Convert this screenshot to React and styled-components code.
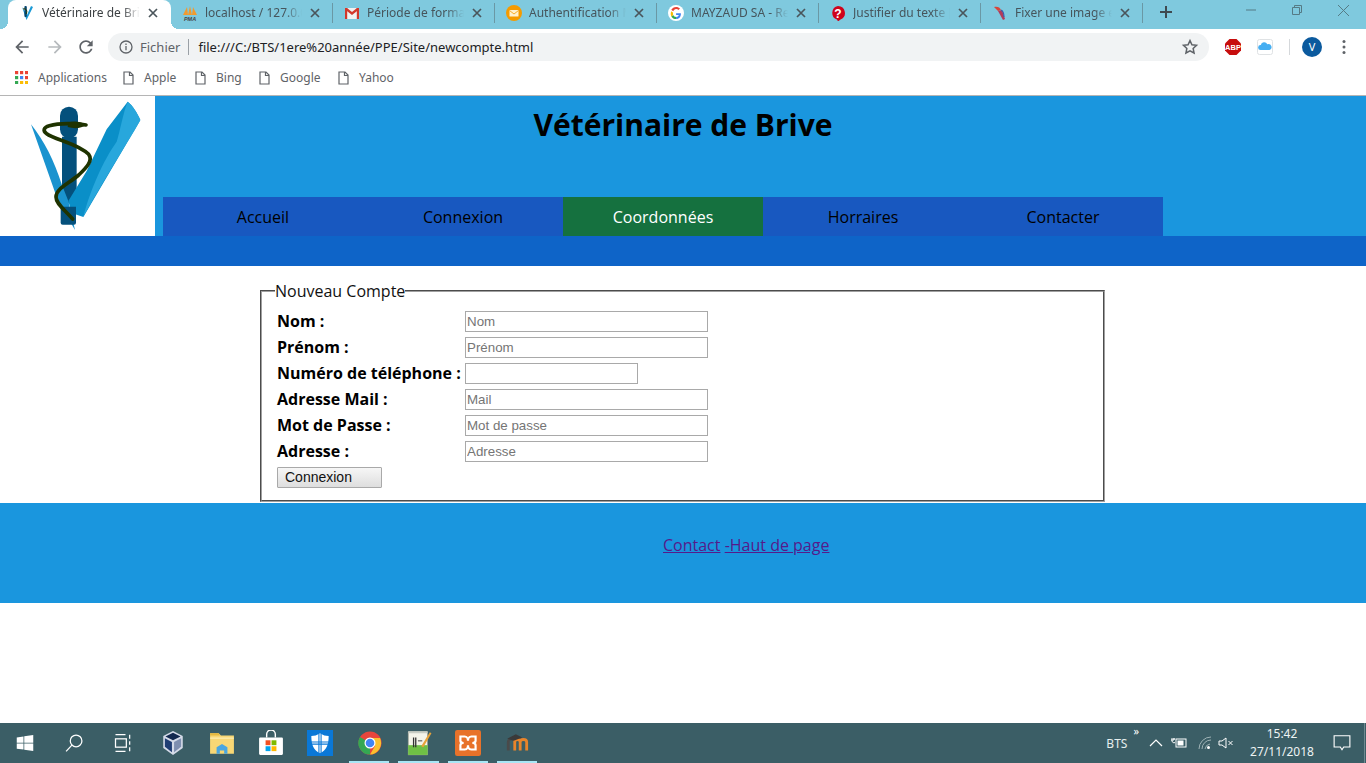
import React from 'react';
import styled, { createGlobalStyle } from 'styled-components';

const UI_FONT = '"Noto Sans", "Open Sans", sans-serif';
const PAGE_FONT = '"Open Sans", "Noto Sans", sans-serif';
const FORM_FONT = '"Liberation Sans", Arial, sans-serif';

const colors = {
  strip: '#7fc9de',
  pill: '#f1f3f4',
  icon: '#5f6368',
  blue: '#1a96de',
  nav: '#1858c0',
  navActive: '#15713f',
  subBar: '#0e64c8',
  taskbar: '#3b5e66',
};

const GlobalStyle = createGlobalStyle`
  html, body {
    margin: 0;
    padding: 0;
    height: 100%;
    background: #fff;
    overflow: hidden;
  }
  #root {
    height: 100%;
  }
`;

const Screen = styled.div`
  height: 763px;
  display: flex;
  flex-direction: column;
`;

/* browser chrome */
const TabStrip = styled.div`
  height: 29px;
  flex: none;
  background: ${colors.strip};
  display: flex;
  padding-left: 8px;
  font-family: ${UI_FONT};
  font-size: 12px;
`;

const TabItem = styled.div`
  position: relative;
  width: ${(p) => (p.$active ? 163 : 162)}px;
  box-sizing: border-box;
  display: flex;
  align-items: center;
  padding: 0 12px 4px 11px;
  gap: 7px;
  background: ${(p) => (p.$active ? '#fff' : 'transparent')};
  color: ${(p) => (p.$active ? '#3c4043' : '#46555c')};
  border-radius: ${(p) => (p.$active ? '8px 8px 0 0' : '0')};

  ${(p) =>
    p.$active &&
    `
    &::before, &::after {
      content: '';
      position: absolute;
      bottom: 0;
      width: 8px;
      height: 8px;
    }
    &::before {
      left: -8px;
      background: radial-gradient(circle at 0 0, transparent 8px, #fff 8px);
    }
    &::after {
      right: -8px;
      background: radial-gradient(circle at 100% 0, transparent 8px, #fff 8px);
    }
  `}

  ${(p) =>
    !p.$active &&
    `
    &::after {
      content: '';
      position: absolute;
      right: 0;
      top: 3px;
      height: 20px;
      width: 1px;
      background: #6a98a5;
    }
  `}
`;

const TabTitle = styled.span`
  flex: 1;
  min-width: 0;
  white-space: nowrap;
  overflow: hidden;
  mask-image: linear-gradient(to right, #000 82%, transparent 100%);
`;

const TabIcon = styled.svg`
  width: 16px;
  height: 16px;
  flex: none;
`;

const TabClose = styled.svg`
  width: 12px;
  height: 12px;
  flex: none;
`;

const NewTab = styled.svg`
  width: 14px;
  height: 14px;
  margin: 5px 0 0 16px;
  flex: none;
`;

const WindowButtons = styled.div`
  margin-left: auto;
  display: flex;
`;

const WindowButton = styled.div`
  width: 46px;
  height: 20px;
  display: flex;
  align-items: center;
  justify-content: center;
  color: #557a85;
`;

const Toolbar = styled.div`
  height: 32px;
  flex: none;
  display: flex;
  align-items: flex-end;
  background: #fff;
`;

const NavButton = styled.svg`
  width: 20px;
  height: 20px;
  flex: none;
  margin: 0 0 4px ${(p) => p.$gap}px;
`;

const AddressPill = styled.div`
  width: 1101px;
  height: 28px;
  margin-left: 12px;
  flex: none;
  box-sizing: border-box;
  background: ${colors.pill};
  border-radius: 14px;
  display: flex;
  align-items: center;
  padding: 0 10px 0 11px;
  font-family: ${UI_FONT};
  font-size: 13px;
  color: #202124;
`;

const SecureLabel = styled.span`
  margin-left: 7px;
  padding-right: 8px;
  color: #5f6368;
  border-right: 1px solid #9aa0a6;
  line-height: 16px;
`;

const UrlText = styled.span`
  margin-left: 9px;
  flex: 1;
`;

const ExtensionIcon = styled.svg`
  width: ${(p) => p.$size || 18}px;
  height: ${(p) => p.$size || 18}px;
  flex: none;
  margin: 0 0 ${(p) => p.$bottom ?? 5}px ${(p) => p.$gap}px;
`;

const ToolbarDivider = styled.div`
  width: 1px;
  height: 16px;
  background: #d5d8db;
  margin: 0 0 6px 15px;
  flex: none;
`;

const BookmarkBar = styled.div`
  height: 35px;
  flex: none;
  box-sizing: border-box;
  border-bottom: 1px solid #b5b5b5;
  display: flex;
  align-items: center;
  padding: 0 0 1px 15px;
  background: #fff;
  font-family: ${UI_FONT};
  font-size: 12px;
  color: #5f6368;
`;

const Bookmark = styled.div`
  display: flex;
  align-items: center;
  width: ${(p) => p.$width}px;
  flex: none;
  gap: ${(p) => p.$gap}px;
`;

/* site */
const SiteHeader = styled.header`
  height: 140px;
  flex: none;
  background: ${colors.blue};
  display: grid;
  grid-template-columns: 155px 1fr 155px;
  grid-template-rows: 101px 39px;
`;

const LogoBox = styled.div`
  grid-row: 1 / 3;
  background: #fff;
`;

const SiteTitle = styled.h1`
  margin: 0;
  padding-top: 8px;
  text-align: center;
  font-family: ${PAGE_FONT};
  font-size: 30px;
  font-weight: 700;
  line-height: 41px;
  color: #000;
`;

const Nav = styled.nav`
  grid-column: 2 / 4;
  margin-left: 8px;
  display: flex;
`;

const NavItem = styled.a`
  width: 200px;
  display: flex;
  align-items: center;
  justify-content: center;
  background: ${(p) => (p.$active ? colors.navActive : colors.nav)};
  color: ${(p) => (p.$active ? '#fff' : '#000')};
  font-family: ${PAGE_FONT};
  font-size: 16px;
`;

const SubBar = styled.div`
  height: 30px;
  flex: none;
  background: ${colors.subBar};
`;

const Main = styled.main`
  flex: none;
  height: 237px;
  box-sizing: border-box;
  padding: 14px 0 0 260px;
  font-family: ${PAGE_FONT};
`;

const FormBox = styled.fieldset`
  width: 845px;
  height: 222px;
  box-sizing: border-box;
  margin: 0;
  padding: 0 15px;
  border: 2px groove #a0a0a0;
  min-inline-size: 0;
`;

const FormLegend = styled.legend`
  padding: 0;
  margin-left: -2px;
  font-size: 16px;
  line-height: 22px;
  color: #111;
`;

const FieldList = styled.div`
  display: flex;
  flex-direction: column;
  gap: 5px;
  padding-top: 9px;
`;

const FieldRow = styled.label`
  display: grid;
  grid-template-columns: 188px auto;
  justify-content: start;
  align-items: center;
  height: 21px;
`;

const FieldLabel = styled.strong`
  font-size: 16px;
  font-weight: 700;
  line-height: 21px;
  color: #000;
`;

const TextField = styled.input`
  width: ${(p) => p.$width || 243}px;
  height: 21px;
  box-sizing: border-box;
  margin: 0;
  padding: 1px;
  border: 1px solid #a9a9a9;
  border-radius: 0;
  outline: none;
  background: #fff;
  font-family: ${FORM_FONT};
  font-size: 13.33px;

  &::placeholder {
    color: #757575;
    opacity: 1;
  }
`;

const SubmitButton = styled.button`
  display: block;
  width: 105px;
  height: 21px;
  margin-top: 5px;
  box-sizing: border-box;
  padding: 0 0 0 7px;
  text-align: left;
  border: 1px solid #a9a9a9;
  border-radius: 1px;
  background: linear-gradient(#f6f6f6, #dedede);
  color: #111;
  font-family: ${FORM_FONT};
  font-size: 14px;
  line-height: 19px;
`;

const SiteFooter = styled.footer`
  height: 100px;
  flex: none;
  box-sizing: border-box;
  background: ${colors.blue};
  padding: 31px 0 0 663px;
  font-family: ${PAGE_FONT};
  font-size: 16px;
  line-height: 22px;
  color: #551a8b;
`;

const FooterLink = styled.a`
  color: #551a8b;
  text-decoration: underline;
`;

const Filler = styled.div`
  flex: 1;
  background: #fff;
`;

/* windows taskbar */
const Taskbar = styled.div`
  height: 40px;
  flex: none;
  background: ${colors.taskbar};
  display: flex;
  align-items: stretch;
`;

const TaskSlot = styled.div`
  position: relative;
  width: 49.3px;
  flex: none;
  display: flex;
  align-items: center;
  justify-content: center;

  ${(p) =>
    p.$running &&
    `
    &::after {
      content: '';
      position: absolute;
      left: 4px;
      right: 5px;
      bottom: 0;
      height: 2px;
      background: #a8e6f5;
    }
  `}
`;

const TaskIcon = styled.svg`
  width: ${(p) => p.$size || 24}px;
  height: ${(p) => p.$size || 24}px;
`;

const Tray = styled.div`
  margin-left: auto;
  display: flex;
  align-items: center;
  color: #fff;
  font-family: ${UI_FONT};
  font-size: 12px;
`;

const TrayLabel = styled.span`
  margin-right: 3px;
  color: #e6eeee;
`;

const TrayChevrons = styled.span`
  font-size: 11px;
  line-height: 11px;
  align-self: flex-start;
  margin: 2px 0 0 3px;
`;

const TrayIcon = styled.svg`
  width: ${(p) => p.$size || 16}px;
  height: ${(p) => p.$size || 16}px;
  margin-left: ${(p) => p.$gap}px;
  flex: none;
`;

const Clock = styled.div`
  width: 76px;
  margin-left: 10px;
  text-align: center;
  line-height: 18px;
  color: #eef4f4;
`;

const NotifySlot = styled.div`
  width: 45px;
  margin-left: 0;
  display: flex;
  justify-content: center;
  align-self: stretch;
  align-items: center;
  box-sizing: border-box;
  border-right: 1px solid #6f8b91;
  margin-right: 1px;
`;

/* drawings */
const CloseGlyph = () => (
  <TabClose viewBox="0 0 12 12">
    <path d="M2 2l8 8M10 2l-8 8" stroke="#4a555b" strokeWidth="1.7" />
  </TabClose>
);

const VetFavicon = () => (
  <TabIcon viewBox="0 0 16 16">
    <path d="M3 2l4.5 13L14 2l-2-1-4 9z" fill="#1a9ad6" />
    <rect x="5.4" y="1" width="2.4" height="11" rx="1" fill="#06466f" />
    <path d="M4 4c3-1 5 2 3 5" stroke="#1f3300" strokeWidth="1" fill="none" />
  </TabIcon>
);

const PmaFavicon = () => (
  <TabIcon viewBox="0 0 16 16">
    <path d="M1 10L5 2l1 8zM6 10l2-9 2 9zM10 10l1-8 4 8z" fill="#f29a2e" />
    <text x="8" y="15.5" textAnchor="middle" fontFamily="Liberation Sans" fontSize="5.5" fontWeight="700" fontStyle="italic" fill="#444">PMA</text>
  </TabIcon>
);

const GmailFavicon = () => (
  <TabIcon viewBox="0 0 16 16">
    <path d="M1 3h14v11h-14z" fill="#f1f1f1" />
    <path d="M1 3h2.2v11H1zM12.8 3H15v11h-2.2z" fill="#d2382c" />
    <path d="M1 3h2l5 4 5-4h2v1.5L8 10 1 4.5z" fill="#d2382c" />
  </TabIcon>
);

const MailFavicon = () => (
  <TabIcon viewBox="0 0 16 16">
    <circle cx="8" cy="8" r="8" fill="#f59b00" />
    <rect x="3.5" y="5" width="9" height="6.5" rx=".6" fill="#fff1d0" />
    <path d="M3.5 5.5L8 9l4.5-3.5" stroke="#f59b00" strokeWidth=".8" fill="none" />
  </TabIcon>
);

const GoogleFavicon = () => (
  <TabIcon viewBox="0 0 16 16">
    <circle cx="8" cy="8" r="8" fill="#fff" />
    <path d="M12.8 8.2H8.1v1.9h2.7c-.3 1.2-1.3 1.9-2.7 1.9V14c2.7 0 4.8-2 4.8-5 0-.3 0-.6-.1-.8z" fill="#4285f4" />
    <path d="M8.1 12c-1.3 0-2.4-.8-2.9-2L3.3 11.400c.9 1.600 2.700 2.600 4.800 2.600z" fill="#34a853" />
    <path d="M5.200 10c-.3-.9-.3-1.400 0-2.200L3.300 6.300c-.8 1.500-.8 3.500 0 5.100z" fill="#fbbc05" />
    <path d="M8.100 4c1 0 1.800.4 2.400 1l1.500-1.500C11 2.600 9.700 2 8.100 2 6 2 4.200 3.100 3.300 4.800l1.900 1.500C5.700 5 6.800 4 8.100 4z" fill="#ea4335" />
  </TabIcon>
);

const QuestionFavicon = () => (
  <TabIcon viewBox="0 0 16 16">
    <path d="M8 1a7 7 0 0 1 2.500 13.500L8 16.500l-1-2A7 7 0 0 1 8 1z" fill="#d0021b" />
    <text x="8" y="12.500" textAnchor="middle" fontFamily="Liberation Sans" fontSize="12" fontWeight="700" fill="#fff">?</text>
  </TabIcon>
);

const FixerFavicon = () => (
  <TabIcon viewBox="0 0 16 16">
    <path d="M2 2c3-1 6 0 7 3l-3 1z" fill="#d8453a" />
    <path d="M6 6l4-1 3 9-2 1z" fill="#b23a5a" />
    <path d="M9 5c2 1 3 4 3 7" stroke="#3a5fb0" strokeWidth="1.200" fill="none" />
  </TabIcon>
);

const Logo = () => (
  <svg viewBox="0 3 465 420" width="155" height="140" style={{ display: 'block' }}>
    <rect x="180" y="35" width="54" height="95" rx="27" fill="#04507c" />
    <path d="M186 125h44v190l-24 10-20-30z" fill="#04507c" />
    <path d="M93 88c40 50 70 110 92 180l20 50 20 87-50-85z" fill="#1a93cf" />
    <path d="M383 20c14 10 30 35 38 55L250 366l-35-12-10-36 55-90 60-125z" fill="#0a8fc8" />
    <path d="M383 20c14 10 30 35 38 55-8 20-110 180-171 291 20-80 60-170 100-226 10-30 20-90 33-120z" fill="#28a7dc" />
    <path d="M182 335h46v48q0 6-6 6h-34q-6 0-6-6z" fill="#04507c" />
    <path d="M258 90c-30-6-80-6-110 2-18 5-20 16-8 24 24 18 96 30 126 62 14 18-6 40-30 62-30 26-68 40-68 66 0 20 24 36 50 66" fill="none" stroke="#1f3300" strokeWidth="11" strokeLinecap="round" />
    <path d="M205 82c20-6 40-2 54 8-14 10-36 12-56 6z" fill="#1f3300" />
  </svg>
);

const AppsIcon = () => (
  <svg viewBox="0 0 13 13" width="13" height="13">
    {[
      ['#ea4335', '#ea4335', '#ea4335'],
      ['#34a853', '#4285f4', '#ea4335'],
      ['#34a853', '#fbbc05', '#fbbc05'],
    ].map((row, r) =>
      row.map((fill, c) => <rect key={`${r}-${c}`} x={c * 5} y={r * 5} width="3.200" height="3.200" fill={fill} />)
    )}
  </svg>
);

const PageIcon = () => (
  <svg viewBox="0 0 11 14" width="11" height="14">
    <path d="M1 1h6l3 3v9H1z" fill="none" stroke="#5f6368" strokeWidth="1.200" />
    <path d="M6.500 1v3.500H10" fill="none" stroke="#5f6368" strokeWidth="1.200" />
  </svg>
);

const tabs = [
  { title: 'Vétérinaire de Brive', icon: <VetFavicon />, active: true },
  { title: 'localhost / 127.0.0.1', icon: <PmaFavicon /> },
  { title: 'Période de formation', icon: <GmailFavicon /> },
  { title: 'Authentification Mail', icon: <MailFavicon /> },
  { title: 'MAYZAUD SA - Recherche', icon: <GoogleFavicon /> },
  { title: 'Justifier du texte [Résolu]', icon: <QuestionFavicon /> },
  { title: 'Fixer une image en', icon: <FixerFavicon /> },
];

const bookmarks = [
  { label: 'Applications', width: 108, gap: 10, icon: <AppsIcon /> },
  { label: 'Apple', width: 72, gap: 10, icon: <PageIcon /> },
  { label: 'Bing', width: 64, gap: 10, icon: <PageIcon /> },
  { label: 'Google', width: 79, gap: 10, icon: <PageIcon /> },
  { label: 'Yahoo', width: 70, gap: 10, icon: <PageIcon /> },
];

const navItems = ['Accueil', 'Connexion', 'Coordonnées', 'Horraires', 'Contacter'];

const fields = [
  { label: 'Nom :', placeholder: 'Nom' },
  { label: 'Prénom :', placeholder: 'Prénom' },
  { label: 'Numéro de téléphone :', width: 173 },
  { label: 'Adresse Mail :', placeholder: 'Mail' },
  { label: 'Mot de Passe :', placeholder: 'Mot de passe' },
  { label: 'Adresse :', placeholder: 'Adresse' },
];

const taskApps = [
  {
    key: 'windows',
    size: 18,
    body: <path d="M1 4.500l9-1.300v8.300H1zM11 3l12-1.700v10.200H11zM1 12.500h9v8.300l-9-1.300zM11 12.500h12v10.200L11 21z" fill="#fff" />,
  },
  {
    key: 'search',
    size: 20,
    body: (
      <g fill="none" stroke="#fff" strokeWidth="1.500">
        <circle cx="14.500" cy="9.500" r="7" />
        <path d="M9.500 14.500L2.500 22" />
      </g>
    ),
  },
  {
    key: 'tasks',
    size: 20,
    body: (
      <g fill="none" stroke="#fff" strokeWidth="1.500">
        <path d="M3 2h12M3 22h12" />
        <rect x="3" y="7" width="13" height="10" />
        <path d="M20 2v5M20 10v4M20 17v5" />
      </g>
    ),
  },
  {
    key: 'vbox',
    size: 26,
    body: (
      <g>
        <path d="M12 1l9 4.500v11L12 23l-9-6.500v-11z" fill="#d5dbe8" />
        <path d="M12 2.500l7 3.500-7 3.500-7-3.500z" fill="#13294f" />
        <path d="M4.500 7.500l6.500 3.500v9.500l-6.500-5z" fill="#1f3d73" />
        <path d="M19.500 7.500L13 11v9.500l6.500-5z" fill="#7f8fb0" />
      </g>
    ),
  },
  {
    key: 'folder',
    size: 26,
    body: (
      <g>
        <path d="M1 3h8l2 2h12v17H1z" fill="#f8d775" />
        <path d="M1 3h8l1 2H1z" fill="#e6b93f" />
        <path d="M7 22v-6l5-3 5 3v6h-3v-3h-4v3z" fill="#4aa6e0" />
        <rect x="1" y="7" width="22" height="1" fill="#fff0b8" />
      </g>
    ),
  },
  {
    key: 'store',
    size: 26,
    body: (
      <g>
        <path d="M8 7V4a4 4 0 0 1 8 0v3" fill="none" stroke="#fff" strokeWidth="1.300" />
        <rect x="1" y="7" width="22" height="16" rx="1" fill="#fff" />
        <rect x="7" y="9.500" width="4.500" height="4.500" fill="#f25022" />
        <rect x="12.500" y="9.500" width="4.500" height="4.500" fill="#7fba00" />
        <rect x="7" y="15" width="4.500" height="4.500" fill="#00a4ef" />
        <rect x="12.500" y="15" width="4.500" height="4.500" fill="#ffb900" />
      </g>
    ),
  },
  {
    key: 'defender',
    size: 26,
    body: (
      <g>
        <rect x="0" y="0" width="24" height="24" fill="#0a78d7" />
        <path d="M12 3c3 2 5 2.500 8 2.500 0 8-2 13-8 16-6-3-8-8-8-16 3 0 5-.5 8-2.500z" fill="#fff" />
        <path d="M11 3v19M13 3v19M3 11h18M3 13h18" stroke="#0a78d7" strokeWidth="1" />
      </g>
    ),
  },
  {
    key: 'chrome',
    size: 24,
    running: true,
    body: (
      <g>
        <circle cx="12" cy="12" r="11.500" fill="#e8453c" />
        <path d="M12 12L2 18a11.500 11.500 0 0 1 0-12z" fill="#34a853" />
        <path d="M12 23.500A11.500 11.500 0 0 1 2 18l5-6h5z" fill="#34a853" />
        <path d="M12 7h10a11.500 11.500 0 0 1-10 16.500L17 15z" fill="#fbc02d" />
        <circle cx="12" cy="12" r="5.500" fill="#fff" />
        <circle cx="12" cy="12" r="4.300" fill="#4285f4" />
      </g>
    ),
  },
  {
    key: 'notepad',
    size: 26,
    running: true,
    body: (
      <g>
        <rect x="2" y="2" width="18" height="21" fill="#f4f4ea" stroke="#8a8f80" strokeWidth=".6" />
        <rect x="2" y="14" width="18" height="9" fill="#6fc045" />
        <path d="M2 1h18v2H2z" fill="#c9cdc4" />
        <path d="M7 7v9M9 7v9" stroke="#333" strokeWidth="1.200" />
        <path d="M11 10h4" stroke="#555" strokeWidth="1" />
        <path d="M14 15L22 2l1.500 1L16 16z" fill="#e8a33a" />
      </g>
    ),
  },
  {
    key: 'xampp',
    size: 26,
    running: true,
    body: (
      <g>
        <rect x="0" y="0" width="24" height="24" rx="2" fill="#e8722a" />
        <path d="M5 6h4c3 0 3 4 3 4s0-4 3-4h4v4c0 2-3 2-3 2s3 0 3 2v4h-4c-3 0-3-4-3-4s0 4-3 4H5v-4c0-2 3-2 3-2s-3 0-3-2z" fill="none" stroke="#fff" strokeWidth="2" />
      </g>
    ),
  },
  {
    key: 'moodle',
    size: 26,
    running: true,
    body: (
      <g>
        <path d="M9 9v10M9 11c0-3 5-3 5 0v8M14 11c0-3 6-3 6 0v8" fill="none" stroke="#e8842a" strokeWidth="2.600" />
        <path d="M3 19v-8c0-2 2-3 5-3" fill="none" stroke="#4a4a4a" strokeWidth="2.600" />
        <path d="M2 8l8-4 6 3-8 3z" fill="#3a3a3a" />
      </g>
    ),
  },
];

export default function App() {
  return (
    <Screen>
      <GlobalStyle />

      <TabStrip>
        {tabs.map((tab) => (
          <TabItem key={tab.title} $active={tab.active}>
            {tab.icon}
            <TabTitle>{tab.title}</TabTitle>
            <CloseGlyph />
          </TabItem>
        ))}
        <NewTab viewBox="0 0 14 14">
          <path d="M7 1v12M1 7h12" stroke="#3f4a50" strokeWidth="2" />
        </NewTab>
        <WindowButtons>
          <WindowButton>
            <svg viewBox="0 0 10 10" width="10" height="10"><path d="M0 5h10" stroke="currentColor" /></svg>
          </WindowButton>
          <WindowButton>
            <svg viewBox="0 0 10 10" width="10" height="10"><path d="M.5 2.500h7v7h-7zM2.500 2.500v-2h7v7h-2" fill="none" stroke="currentColor" /></svg>
          </WindowButton>
          <WindowButton>
            <svg viewBox="0 0 10 10" width="11" height="11"><path d="M0 0l10 10M10 0L0 10" stroke="currentColor" strokeWidth=".9" /></svg>
          </WindowButton>
        </WindowButtons>
      </TabStrip>

      <Toolbar>
        <NavButton $gap={12} viewBox="0 0 24 24">
          <path fill={colors.icon} d="M20 11H7.830l5.590-5.590L12 4l-8 8 8 8 1.410-1.410L7.830 13H20v-2z" />
        </NavButton>
        <NavButton $gap={13} viewBox="0 0 24 24">
          <path fill="#b6babd" d="M12 4l-1.410 1.410L16.170 11H4v2h12.170l-5.580 5.590L12 20l8-8z" />
        </NavButton>
        <NavButton $gap={11} viewBox="0 0 24 24">
          <path fill={colors.icon} d="M17.650 6.350C16.200 4.900 14.210 4 12 4c-4.420 0-7.990 3.580-7.990 8s3.570 8 7.990 8c3.730 0 6.840-2.550 7.730-6h-2.080c-.82 2.330-3.040 4-5.650 4-3.310 0-6-2.690-6-6s2.690-6 6-6c1.660 0 3.140.69 4.220 1.780L13 11h7V4l-2.350 2.350z" />
        </NavButton>
        <AddressPill>
          <svg viewBox="0 0 14 14" width="14" height="14">
            <circle cx="7" cy="7" r="6" fill="none" stroke="#5f6368" strokeWidth="1.300" />
            <path d="M7 6v4.200M7 3.500v1.400" stroke="#5f6368" strokeWidth="1.300" />
          </svg>
          <SecureLabel>Fichier</SecureLabel>
          <UrlText>file:///C:/BTS/1ere%20année/PPE/Site/newcompte.html</UrlText>
          <svg viewBox="0 0 24 24" width="18" height="18">
            <path d="M12 3.500l2.600 5.600 6.100.7-4.500 4.200 1.200 6-5.400-3-5.400 3 1.200-6-4.500-4.200 6.100-.7z" fill="none" stroke="#5f6368" strokeWidth="2" />
          </svg>
        </AddressPill>
        <ExtensionIcon $gap={15} viewBox="0 0 18 18">
          <path d="M5.500 1h7L17 5.500v7L12.500 17h-7L1 12.500v-7z" fill="#c70d0d" />
          <text x="9" y="12" textAnchor="middle" fontFamily="Liberation Sans" fontSize="7.500" fontWeight="700" fill="#fff">ABP</text>
        </ExtensionIcon>
        <ExtensionIcon $gap={14} viewBox="0 0 18 18">
          <rect x="1.500" y="1.500" width="15" height="15" rx="2" fill="#fff" stroke="#dfe2e4" />
          <path d="M4.500 12a2.500 2.500 0 0 1 .3-5 3.500 3.500 0 0 1 6.500-.8A3 3 0 0 1 13.500 12z" fill="#45aef2" />
        </ExtensionIcon>
        <ToolbarDivider />
        <ExtensionIcon $gap={12} $size={20} $bottom={4} viewBox="0 0 20 20">
          <circle cx="10" cy="10" r="10" fill="#0b5a9e" />
          <text x="10" y="14" textAnchor="middle" fontFamily="Noto Sans" fontSize="11" fill="#fff">V</text>
        </ExtensionIcon>
        <ExtensionIcon $gap={14} $size={16} $bottom={6} viewBox="0 0 16 16">
          <circle cx="8" cy="2.500" r="1.500" fill="#5f6368" />
          <circle cx="8" cy="8" r="1.500" fill="#5f6368" />
          <circle cx="8" cy="13.500" r="1.500" fill="#5f6368" />
        </ExtensionIcon>
      </Toolbar>

      <BookmarkBar>
        {bookmarks.map((bm) => (
          <Bookmark key={bm.label} $width={bm.width} $gap={bm.gap}>
            {bm.icon}
            <span>{bm.label}</span>
          </Bookmark>
        ))}
      </BookmarkBar>

      <SiteHeader>
        <LogoBox>
          <Logo />
        </LogoBox>
        <SiteTitle>Vétérinaire de Brive</SiteTitle>
        <div />
        <Nav>
          {navItems.map((item) => (
            <NavItem key={item} $active={item === 'Coordonnées'}>{item}</NavItem>
          ))}
        </Nav>
      </SiteHeader>
      <SubBar />

      <Main>
        <FormBox>
          <FormLegend>Nouveau Compte</FormLegend>
          <FieldList>
            {fields.map((field) => (
              <FieldRow key={field.label}>
                <FieldLabel>{field.label}</FieldLabel>
                <TextField $width={field.width} placeholder={field.placeholder} />
              </FieldRow>
            ))}
          </FieldList>
          <SubmitButton type="button">Connexion</SubmitButton>
        </FormBox>
      </Main>

      <SiteFooter>
        <FooterLink>Contact</FooterLink> <FooterLink>-Haut de page</FooterLink>
      </SiteFooter>
      <Filler />

      <Taskbar>
        {taskApps.map((app) => (
          <TaskSlot key={app.key} $running={app.running}>
            <TaskIcon $size={app.size} viewBox="0 0 24 24">{app.body}</TaskIcon>
          </TaskSlot>
        ))}
        <Tray>
          <TrayLabel>BTS</TrayLabel>
          <TrayChevrons>»</TrayChevrons>
          <TrayIcon $gap={9} viewBox="0 0 16 16">
            <path d="M2 11l6-6 6 6" fill="none" stroke="#fff" strokeWidth="1.200" />
          </TrayIcon>
          <TrayIcon $gap={7} viewBox="0 0 16 16">
            <path d="M0 5h3V3M3 5v-2M1 3v3a2 2 0 0 0 3 1.500" fill="none" stroke="#fff" />
            <rect x="5" y="4" width="10" height="8" fill="none" stroke="#fff" />
            <rect x="6.500" y="5.500" width="6" height="5" fill="#fff" />
          </TrayIcon>
          <TrayIcon $gap={10} viewBox="0 0 16 16">
            <path d="M2 14A12 12 0 0 1 14 2M5 14a9 9 0 0 1 9-9M8 14a6 6 0 0 1 5-5" fill="none" stroke="#9fb3b6" />
            <circle cx="11.500" cy="12.500" r="1.500" fill="#fff" />
          </TrayIcon>
          <TrayIcon $gap={5} viewBox="0 0 16 16">
            <path d="M1 6h3l4-3v10L4 10H1z" fill="none" stroke="#fff" />
            <path d="M10.500 6l4 4M14.500 6l-4 4" stroke="#fff" />
          </TrayIcon>
          <Clock>
            <div>15:42</div>
            <div>27/11/2018</div>
          </Clock>
          <NotifySlot>
            <TrayIcon viewBox="0 0 16 16" $size={18}>
              <path d="M1 1.500h14v10H9.500L8 14l-1.500-2.500H1z" fill="none" stroke="#fff" />
            </TrayIcon>
          </NotifySlot>
        </Tray>
      </Taskbar>
    </Screen>
  );
}
